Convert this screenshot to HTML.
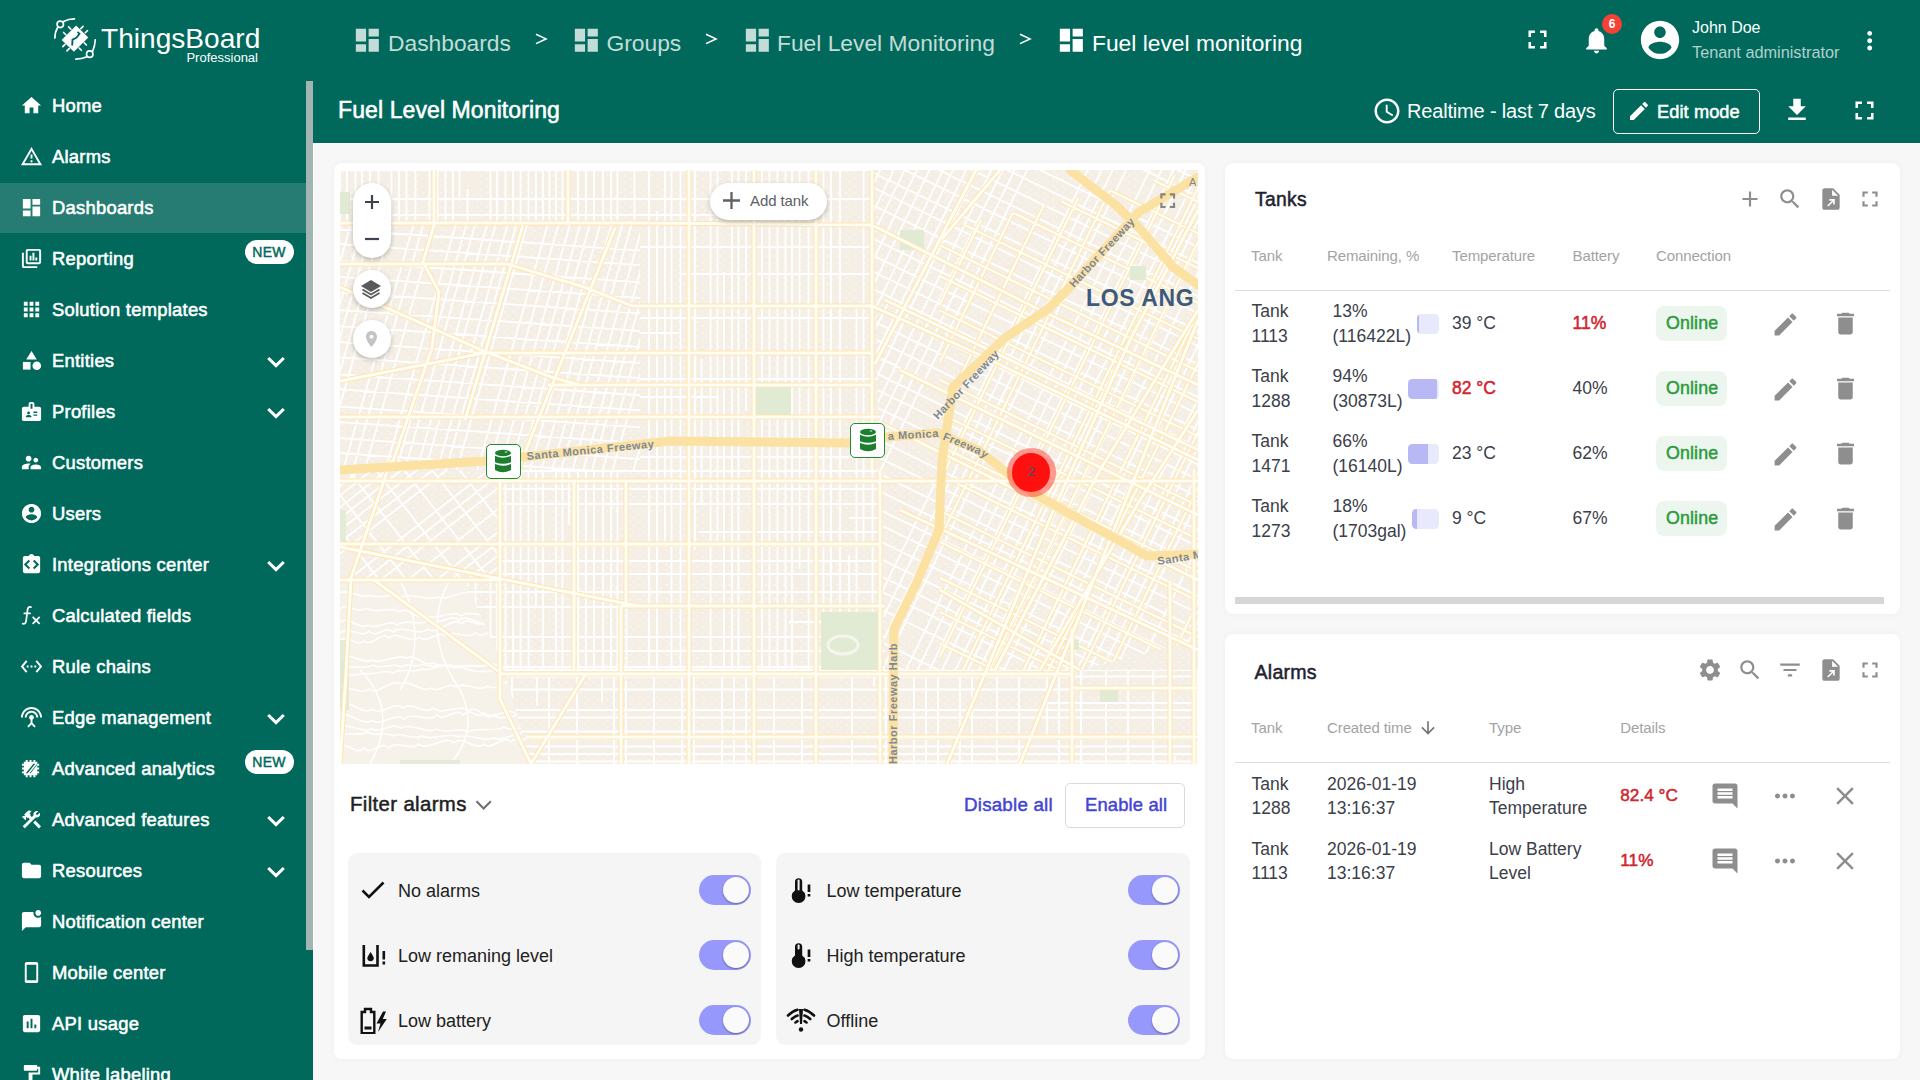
<!DOCTYPE html>
<html><head><meta charset="utf-8">
<style>
*{box-sizing:border-box;margin:0;padding:0}
html,body{width:1920px;height:1080px;overflow:hidden;font-family:"Liberation Sans",sans-serif;background:#f7f7f7}
.abs{position:absolute}
#top{position:absolute;left:0;top:0;width:1920px;height:143px;background:#00695c}
#side{position:absolute;left:0;top:80px;width:313px;height:1000px;background:#00695c;overflow:hidden}
#thumb{position:absolute;left:306px;top:81px;width:7px;height:869px;background:#a2b5b2}
.nav{position:absolute;left:0;width:306px;height:50px;color:#fff;font-weight:normal;font-size:18.4px;letter-spacing:0.25px;line-height:50px;-webkit-text-stroke:0.55px #fff}
.nav.sel{background:#267c72}
.nav .t{position:absolute;left:52px;top:0;white-space:nowrap}
.nav svg.i{position:absolute;left:20px;top:13px;width:23px;height:23px;fill:#fff}
.nav .chev{position:absolute;left:265.5px;top:19px;width:20px;height:14px}
.nav .new{position:absolute;left:244.5px;top:6px;width:49px;height:24px;border-radius:12px;background:#fff;color:#00695c;font-size:14px;font-weight:normal;text-align:center;line-height:24px;letter-spacing:0.2px;-webkit-text-stroke:0.45px #00695c}
.card{position:absolute;background:#fff;border-radius:8px;box-shadow:0 0 6px rgba(0,0,0,0.04)}
</style></head><body>
<div id="top"></div>
<div id="side"></div>
<div class="nav" style="top:81px"><svg class="i" viewBox="0 0 24 24"><path d="M10 20v-6h4v6h5v-8h3L12 3 2 12h3v8z"/></svg><span class="t">Home</span></div>
<div class="nav" style="top:132px"><svg class="i" viewBox="0 0 24 24"><path d="M12 5.99L19.53 19H4.47L12 5.99M12 2L1 21h22L12 2zm1 14h-2v2h2v-2zm0-6h-2v4h2v-4z"/></svg><span class="t">Alarms</span></div>
<div class="nav sel" style="top:183px"><svg class="i" viewBox="0 0 24 24"><path d="M3 13h8V3H3v10zm0 8h8v-6H3v6zm10 0h8V11h-8v10zm0-18v6h8V3h-8z"/></svg><span class="t">Dashboards</span></div>
<div class="nav" style="top:234px"><svg class="i" viewBox="0 0 24 24"><path d="M4 6H2v14c0 1.1.9 2 2 2h14v-2H4V6z"/><path d="M20 2H8c-1.1 0-2 .9-2 2v12c0 1.1.9 2 2 2h12c1.1 0 2-.9 2-2V4c0-1.1-.9-2-2-2zm0 14H8V4h12v12z" /><path d="M10 9h2v5h-2zM13 6h2v8h-2zM16 11h2v3h-2z"/></svg><span class="t">Reporting</span><span class="new">NEW</span></div>
<div class="nav" style="top:285px"><svg class="i" viewBox="0 0 24 24"><path d="M4 8h4V4H4v4zm6 12h4v-4h-4v4zm-6 0h4v-4H4v4zm0-6h4v-4H4v4zm6 0h4v-4h-4v4zm6-10v4h4V4h-4zm-6 4h4V4h-4v4zm6 6h4v-4h-4v4zm0 6h4v-4h-4v4z"/></svg><span class="t">Solution templates</span></div>
<div class="nav" style="top:336px"><svg class="i" viewBox="0 0 24 24"><path d="M12 2l-5.5 9h11z"/><circle cx="17.5" cy="17.5" r="4.5"/><path d="M3 13.5h8v8H3z"/></svg><span class="t">Entities</span><svg class="chev" viewBox="0 0 20 14"><path d="M2.2 3 L10 10.6 L17.8 3" fill="none" stroke="#fff" stroke-width="3.1"/></svg></div>
<div class="nav" style="top:387px"><svg class="i" viewBox="0 0 24 24"><path d="M20 7h-5V4c0-1.1-.9-2-2-2h-2c-1.1 0-2 .9-2 2v3H4c-1.1 0-2 .9-2 2v11c0 1.1.9 2 2 2h16c1.1 0 2-.9 2-2V9c0-1.1-.9-2-2-2zM9 12c.83 0 1.5.67 1.5 1.5S9.83 15 9 15s-1.5-.67-1.5-1.5S8.17 12 9 12zm3 6H6v-.43c0-.6.36-1.15.92-1.39.64-.28 1.34-.43 2.08-.43s1.44.15 2.08.43c.55.24.92.78.92 1.39V18zm1-9h-2V4h2v5zm5 7.5h-4V15h4v1.5zm0-3h-4V12h4v1.5z"/></svg><span class="t">Profiles</span><svg class="chev" viewBox="0 0 20 14"><path d="M2.2 3 L10 10.6 L17.8 3" fill="none" stroke="#fff" stroke-width="3.1"/></svg></div>
<div class="nav" style="top:438px"><svg class="i" viewBox="0 0 24 24"><path d="M16.5 12c1.38 0 2.49-1.12 2.49-2.5S17.88 7 16.5 7C15.12 7 14 8.12 14 9.5s1.12 2.5 2.5 2.5zM9 11c1.66 0 2.99-1.34 2.99-3S10.66 5 9 5C7.34 5 6 6.34 6 8s1.34 3 3 3zm7.5 3c-1.83 0-5.5.92-5.5 2.75V19h11v-2.25c0-1.830-3.67-2.75-5.5-2.75zM9 13c-2.33 0-7 1.17-7 3.5V19h7v-2.25c0-.85.33-2.340 2.37-3.47C10.5 13.1 9.66 13 9 13z"/></svg><span class="t">Customers</span></div>
<div class="nav" style="top:489px"><svg class="i" viewBox="0 0 24 24"><path d="M12 2C6.48 2 2 6.48 2 12s4.48 10 10 10 10-4.48 10-10S17.52 2 12 2zm0 3c1.66 0 3 1.34 3 3s-1.34 3-3 3-3-1.34-3-3 1.34-3 3-3zm0 14.2c-2.5 0-4.71-1.28-6-3.22.03-1.99 4-3.08 6-3.080 1.99 0 5.970 1.09 6 3.08-1.29 1.94-3.5 3.22-6 3.22z"/></svg><span class="t">Users</span></div>
<div class="nav" style="top:540px"><svg class="i" viewBox="0 0 24 24"><path d="M19 3h-4.18C14.4 1.84 13.3 1 12 1s-2.4.84-2.82 2H5c-1.1 0-2 .9-2 2v14c0 1.1.9 2 2 2h14c1.1 0 2-.9 2-2V5c0-1.1-.9-2-2-2zm-8.5 12.5L9 17l-5-5 5-5 1.5 1.5L7 12l3.5 3.5zm4.5 1.5l-1.5-1.5L17 12l-3.5-3.5L15 7l5 5-5 5z"/></svg><span class="t">Integrations center</span><svg class="chev" viewBox="0 0 20 14"><path d="M2.2 3 L10 10.6 L17.8 3" fill="none" stroke="#fff" stroke-width="3.1"/></svg></div>
<div class="nav" style="top:591px"><svg class="i" viewBox="0 0 24 24"><path d="M11.5 3.2 C9.5 2.6 8.3 3.6 7.9 5.8 L6.4 17.5 C6 20.2 4.8 21 2.8 20.5 M4.5 9.8 H10.5" fill="none" stroke="#fff" stroke-width="1.8" stroke-linecap="round"/><path d="M13.2 13.5 L20.5 20.8 M20.5 13.5 L13.2 20.8" stroke="#fff" stroke-width="1.9"/></svg><span class="t">Calculated fields</span></div>
<div class="nav" style="top:642px"><svg class="i" viewBox="0 0 24 24"><path d="M7.77 6.76L6.23 5.48.82 12l5.41 6.52 1.54-1.28L3.42 12l4.35-5.24zM7 13h2v-2H7v2zm10-2h-2v2h2v-2zm-6 2h2v-2h-2v2zm6.77-7.52l-1.54 1.28L20.58 12l-4.35 5.240 1.54 1.28L23.18 12l-5.41-6.52z"/></svg><span class="t">Rule chains</span></div>
<div class="nav" style="top:693px"><svg class="i" viewBox="0 0 24 24"><path d="M12 5c-3.87 0-7 3.13-7 7h2c0-2.76 2.24-5 5-5s5 2.24 5 5h2c0-3.87-3.13-7-7-7zm1 9.29c.88-.39 1.5-1.26 1.5-2.29 0-1.38-1.12-2.5-2.5-2.5S9.5 10.62 9.5 12c0 1.02.62 1.9 1.5 2.29v3.3L7.59 21 9 22.41l3-3 3 3L16.41 21 13 17.59v-3.3zM12 1C5.930 1 1 5.93 1 12h2c0-4.97 4.03-9 9-9s9 4.03 9 9h2c0-6.07-4.93-11-11-11z"/></svg><span class="t">Edge management</span><svg class="chev" viewBox="0 0 20 14"><path d="M2.2 3 L10 10.6 L17.8 3" fill="none" stroke="#fff" stroke-width="3.1"/></svg></div>
<div class="nav" style="top:744px"><svg class="i" viewBox="0 0 24 24"><path d="M6 3h2v2h2V3h2v2h2V3h2v2h2v2h2v2h-2v2h2v2h-2v2h2v2h-2v2h-2v2h-2v-2h-2v2h-2v-2H8v2H6v-2H4v-2H2v-2h2v-2H2v-2h2V9H2V7h2V5h2z" /><path d="M8 17l8-10h-2l-8 10z" fill="#00695c"/><path d="M11 17l7-9v-1l-8 10z" fill="#00695c"/></svg><span class="t">Advanced analytics</span><span class="new">NEW</span></div>
<div class="nav" style="top:795px"><svg class="i" viewBox="0 0 24 24"><path d="M13.78 15.3l6 6 2.11-2.16-6-6zM17.5 10c1.93 0 3.5-1.57 3.5-3.5 0-.58-.16-1.12-.41-1.6l-2.7 2.7-1.49-1.49 2.7-2.7c-.48-.25-1.02-.41-1.6-.41C15.57 3 14 4.57 14 6.5c0 .41.08.8.21 1.16l-1.85 1.85-1.78-1.78.71-.71-1.41-1.41L12 3.49c-1.17-1.17-3.07-1.17-4.24 0L4.22 7.03l1.41 1.41H2.81l-.71.71 3.54 3.54.71-.71V9.15l1.41 1.41.71-.71 1.78 1.78-7.41 7.410 2.12 2.12L16.34 9.79c.36.13.75.21 1.16.21z"/></svg><span class="t">Advanced features</span><svg class="chev" viewBox="0 0 20 14"><path d="M2.2 3 L10 10.6 L17.8 3" fill="none" stroke="#fff" stroke-width="3.1"/></svg></div>
<div class="nav" style="top:846px"><svg class="i" viewBox="0 0 24 24"><path d="M10 4H4c-1.1 0-1.99.9-1.99 2L2 18c0 1.1.9 2 2 2h16c1.1 0 2-.9 2-2V8c0-1.1-.9-2-2-2h-8l-2-2z"/></svg><span class="t">Resources</span><svg class="chev" viewBox="0 0 20 14"><path d="M2.2 3 L10 10.6 L17.8 3" fill="none" stroke="#fff" stroke-width="3.1"/></svg></div>
<div class="nav" style="top:897px"><svg class="i" viewBox="0 0 24 24"><path d="M22 6.98V16c0 1.1-.9 2-2 2H6l-4 4V4c0-1.1.9-2 2-2h10.1c-.06.32-.1.66-.1 1 0 2.76 2.24 5 5 5 1.13 0 2.16-.39 3-1.02zM16 3c0 1.66 1.34 3 3 3s3-1.34 3-3-1.34-3-3-3-3 1.34-3 3z"/></svg><span class="t">Notification center</span></div>
<div class="nav" style="top:948px"><svg class="i" viewBox="0 0 24 24"><path d="M17 1.01L7 1c-1.1 0-2 .9-2 2v18c0 1.1.9 2 2 2h10c1.1 0 2-.9 2-2V3c0-1.1-.9-1.99-2-1.99zM17 20H7V4h10v16z"/></svg><span class="t">Mobile center</span></div>
<div class="nav" style="top:999px"><svg class="i" viewBox="0 0 24 24"><path d="M19 3H5c-1.1 0-2 .9-2 2v14c0 1.1.9 2 2 2h14c1.1 0 2-.9 2-2V5c0-1.1-.9-2-2-2zM9 17H7v-7h2v7zm4 0h-2V7h2v10zm4 0h-2v-4h2v4z"/></svg><span class="t">API usage</span></div>
<div class="nav" style="top:1050px"><svg class="i" viewBox="0 0 24 24"><path d="M18 4V3c0-.55-.45-1-1-1H5c-.55 0-1 .45-1 1v4c0 .55.45 1 1 1h12c.55 0 1-.45 1-1V6h1v4H9v11c0 .55.45 1 1 1h2c.55 0 1-.45 1-1v-9h8V4h-3z"/></svg><span class="t">White labeling</span></div>
<div id="thumb"></div>
<div class="abs" style="left:313px;top:143px;width:1607px;height:1px;background:#fff"></div>
<div class="abs" style="left:313px;top:143px;width:1px;height:937px;background:#fff"></div>
<!-- logo -->
<svg class="abs" style="left:45px;top:10px" width="80" height="60" viewBox="0 0 1440 1080">
 <g fill="none" stroke="#fff" stroke-width="30" stroke-linecap="round">
  <circle cx="275" cy="258" r="58"/>
  <circle cx="805" cy="795" r="58"/>
  <path d="M335 205 Q420 160 530 160"/>
  <path d="M228 315 Q180 390 178 505"/>
  <path d="M745 845 Q660 880 555 885"/>
  <path d="M860 735 Q900 640 905 535"/>
  <path d="M335 405 L375 445 M425 305 L465 345 M685 295 L645 335 M765 370 L725 410 M745 630 L705 590 M655 725 L615 685 M320 660 L360 620 M395 735 L435 695"/>
 </g>
 <path d="M560 280 L780 495 L520 750 L300 540 Z" fill="#fff"/>
 <path d="M585 395 L620 430 L565 500 L495 535 L490 640" fill="none" stroke="#00695c" stroke-width="34"/>
</svg>
<div class="abs" style="left:101px;top:19.5px;font-size:28.1px;color:#fff;line-height:38px;white-space:nowrap">ThingsBoard</div>
<div class="abs" style="left:158px;top:50px;width:100px;text-align:right;font-size:13px;color:#fff;line-height:16px">Professional</div>
<!-- breadcrumbs -->
<style>
.bc{position:absolute;top:0;height:80px;line-height:80px;font-size:22.8px;color:#c3dcd7;white-space:nowrap}
.bci{position:absolute;fill:#c3dcd7}
.gt{position:absolute;top:33px}
.hi{position:absolute;fill:#fff}
</style>
<svg class="bci" style="left:352px;top:25px" width="30.7" height="30.7" viewBox="0 0 24 24"><path d="M3 13h8V3H3v10zm0 8h8v-6H3v6zm10 0h8V11h-8v10zm0-18v6h8V3h-8z"/></svg>
<div class="bc" style="left:388px;top:3px;">Dashboards</div>
<svg class="gt" style="left:535px" width="13" height="12" viewBox="0 0 13 12"><path d="M1 1.2 L11 5.9 L1 10.6" fill="none" stroke="#fff" stroke-width="1.6"/></svg>
<svg class="bci" style="left:571px;top:25px" width="30.7" height="30.7" viewBox="0 0 24 24"><path d="M3 13h8V3H3v10zm0 8h8v-6H3v6zm10 0h8V11h-8v10zm0-18v6h8V3h-8z"/></svg>
<div class="bc" style="left:606.5px;top:3px;">Groups</div>
<svg class="gt" style="left:705px" width="13" height="12" viewBox="0 0 13 12"><path d="M1 1.2 L11 5.9 L1 10.6" fill="none" stroke="#fff" stroke-width="1.6"/></svg>
<svg class="bci" style="left:742px;top:25px" width="30.7" height="30.7" viewBox="0 0 24 24"><path d="M3 13h8V3H3v10zm0 8h8v-6H3v6zm10 0h8V11h-8v10zm0-18v6h8V3h-8z"/></svg>
<div class="bc" style="left:777px;top:3px;">Fuel Level Monitoring</div>
<svg class="gt" style="left:1019px" width="13" height="12" viewBox="0 0 13 12"><path d="M1 1.2 L11 5.9 L1 10.6" fill="none" stroke="#fff" stroke-width="1.6"/></svg>
<svg class="bci" style="left:1056px;top:25px;fill:#fff" width="30.7" height="30.7" viewBox="0 0 24 24"><path d="M3 13h8V3H3v10zm0 8h8v-6H3v6zm10 0h8V11h-8v10zm0-18v6h8V3h-8z"/></svg>
<div class="bc" style="left:1092px;top:3px;color:#fff">Fuel level monitoring</div>
<!-- right header -->
<svg class="hi" style="left:1522px;top:24px" width="31" height="31" viewBox="0 0 24 24"><path d="M7 14H5v5h5v-2H7v-3zm-2-4h2V7h3V5H5v5zm12 7h-3v2h5v-5h-2v3zM14 5v2h3v3h2V5h-5z"/></svg>
<svg class="hi" style="left:1581px;top:25px" width="31" height="31" viewBox="0 0 24 24"><path d="M12 22c1.1 0 2-.9 2-2h-4c0 1.1.89 2 2 2zm6-6v-5c0-3.07-1.64-5.64-4.5-6.32V4c0-.83-.67-1.5-1.5-1.5s-1.5.67-1.5 1.5v.68C7.63 5.36 6 7.92 6 11v5l-2 2v1h16v-1l-2-2z"/></svg>
<div class="abs" style="left:1602px;top:14px;width:20px;height:20px;border-radius:10px;background:#f44336;color:#fff;font-size:12px;font-weight:bold;text-align:center;line-height:20px">6</div>
<svg class="hi" style="left:1637px;top:17px" width="46" height="46" viewBox="0 0 24 24"><path d="M12 2C6.48 2 2 6.48 2 12s4.48 10 10 10 10-4.48 10-10S17.52 2 12 2zm0 3c1.66 0 3 1.34 3 3s-1.34 3-3 3-3-1.34-3-3 1.340-3 3-3zm0 14.2c-2.5 0-4.71-1.28-6-3.22.03-1.99 4-3.08 6-3.08 1.99 0 5.97 1.09 6 3.08-1.29 1.94-3.5 3.22-6 3.22z"/></svg>
<div class="abs" style="left:1692px;top:16px;font-size:16px;color:#fff;line-height:24px;white-space:nowrap">John Doe</div>
<div class="abs" style="left:1692px;top:40px;font-size:16.3px;color:rgba(255,255,255,0.7);line-height:24px;white-space:nowrap">Tenant administrator</div>
<svg class="hi" style="left:1855px;top:25.5px" width="29.4" height="29.4" viewBox="0 0 24 24"><path d="M12 8c1.1 0 2-.9 2-2s-.9-2-2-2-2 .9-2 2 .9 2 2 2zm0 2c-1.1 0-2 .9-2 2s.9 2 2 2 2-.9 2-2-.9-2-2-2zm0 6c-1.1 0-2 .9-2 2s.9 2 2 2 2-.9 2-2-.9-2-2-2z"/></svg>
<!-- toolbar -->
<div class="abs" style="left:338px;top:95.5px;font-size:23px;letter-spacing:0.1px;-webkit-text-stroke:0.55px #fff;color:#fff;line-height:28px;white-space:nowrap">Fuel Level Monitoring</div>
<svg class="hi" style="left:1371.5px;top:96px" width="30" height="30" viewBox="0 0 24 24"><path d="M11.99 2C6.47 2 2 6.48 2 12s4.47 10 9.99 10C17.52 22 22 17.52 22 12S17.52 2 11.99 2zM12 20c-4.42 0-8-3.58-8-8s3.58-8 8-8 8 3.58 8 8-3.58 8-8 8zm.5-13H11v6l5.25 3.15.75-1.23-4.5-2.67z"/></svg>
<div class="abs" style="left:1407px;top:97px;font-size:20px;letter-spacing:-0.17px;color:#fff;line-height:28px;white-space:nowrap">Realtime - last 7 days</div>
<div class="abs" style="left:1613px;top:89px;width:147px;height:45px;border:1.3px solid #fff;border-radius:5px"></div>
<svg class="hi" style="left:1627px;top:99px" width="24" height="24" viewBox="0 0 24 24"><path d="M3 17.25V21h3.75L17.81 9.94l-3.75-3.75L3 17.25zM20.71 7.04c.39-.39.39-1.02 0-1.41l-2.34-2.34c-.39-.39-1.02-.39-1.41 0l-1.83 1.83 3.75 3.75 1.83-1.83z"/></svg>
<div class="abs" style="left:1657px;top:97.5px;font-size:18.2px;letter-spacing:0.1px;-webkit-text-stroke:0.5px #fff;color:#fff;line-height:28px;white-space:nowrap">Edit mode</div>
<svg class="hi" style="left:1782px;top:95px" width="30" height="30" viewBox="0 0 24 24"><path d="M19 9h-4V3H9v6H5l7 7 7-7zM5 18v2h14v-2H5z"/></svg>
<svg class="hi" style="left:1849px;top:95px" width="31" height="31" viewBox="0 0 24 24"><path d="M7 14H5v5h5v-2H7v-3zm-2-4h2V7h3V5H5v5zm12 7h-3v2h5v-5h-2v3zM14 5v2h3v3h2V5h-5z"/></svg>

<!-- cards -->
<div class="card" style="left:334px;top:163px;width:871px;height:896px"></div>
<div class="card" style="left:1225px;top:163px;width:675px;height:451px"></div>
<div class="card" style="left:1225px;top:634px;width:675px;height:425px"></div>
<svg class="abs" style="left:340px;top:170px" width="858" height="594" viewBox="0 0 858 594">
<defs>
<clipPath id="r1"><path d="M0 55 H300 V300 H0 Z"/></clipPath>
<clipPath id="r1b"><path d="M0 300 H160 V410 H0 Z"/></clipPath>
<clipPath id="rh"><path d="M0 410 H125 L165 500 L190 594 H0 Z"/></clipPath>
<clipPath id="r2"><path d="M0 0 H532 L540 300 L545 500 H858 V594 H190 L165 500 L125 410 H160 V300 H300 V55 H0 Z"/></clipPath>
<clipPath id="dt"><path d="M600 60 L858 0 V470 L740 500 H600 Z"/></clipPath>
<clipPath id="r3"><path d="M532 0 H858 V470 L740 500 H545 L540 300 Z"/></clipPath>
<pattern id="bp" width="9" height="7" patternUnits="userSpaceOnUse"><rect x="1" y="1" width="3" height="2" fill="#f7f3ec"/><rect x="5" y="4" width="2" height="2" fill="#f7f3ec"/></pattern>
</defs>
<rect width="858" height="594" fill="#f4eee5"/>
<rect width="858" height="594" fill="url(#bp)"/>
<g clip-path="url(#r1)"><path d="M-425 921L71 -809M-415 924L81 -806M-406 927L91 -803M-396 930L100 -801M-386 933L110 -798M-368 938L128 -793M-357 941L139 -789M-337 946L159 -784M-329 949L168 -781M-320 951L176 -779M-310 954L186 -776M-300 957L196 -773M-281 963L215 -768M-271 966L225 -765M-261 968L235 -762M-252 971L244 -759M-241 974L255 -756M-232 977L264 -754M-223 979L273 -751M-214 982L282 -748M-194 988L302 -743M-185 990L311 -740M-174 993L322 -737M-155 999L341 -731M-145 1002L351 -729M-137 1004L359 -726M-126 1007L370 -723M-118 1009L378 -721M-107 1013L389 -718M-99 1015L397 -715M-89 1018L407 -713M-70 1023L426 -707M-60 1026L436 -704M-50 1029L447 -701M-40 1032L456 -699M-31 1034L465 -696M-22 1037L475 -693M-11 1040L485 -690M-1 1043L495 -687M7 1045L504 -685M18 1048L514 -682M28 1051L524 -679M36 1054L532 -677M46 1056L542 -674M55 1059L551 -671M74 1065L571 -666M84 1067L580 -663M95 1071L591 -660M104 1073L600 -657M113 1076L609 -655M124 1079L620 -652M132 1081L628 -649M143 1084L639 -646M151 1087L647 -644M162 1090L658 -641M171 1092L667 -638M180 1095L676 -635M190 1098L686 -633M199 1100L696 -630M210 1103L706 -627M219 1106L715 -624M228 1109L724 -622M-725 -232L1070 -106M-727 -216L1069 -90M-728 -199L1068 -74M-729 -185L1067 -60M-730 -168L1066 -43M-733 -120L1062 5M-736 -88L1060 38M-737 -72L1059 53M-738 -56L1058 69M-742 8L1053 133M-743 22L1052 148M-744 39L1051 165M-746 55L1050 180M-747 70L1049 196M-748 88L1048 213M-749 104L1047 229M-750 120L1046 245M-751 135L1044 260M-752 152L1043 277M-753 167L1042 292M-755 184L1041 309M-756 199L1040 325M-757 215L1039 341M-758 230L1038 356M-759 248L1037 373M-760 263L1035 389M-761 279L1034 405M-762 295L1033 420M-763 310L1032 435M-764 326L1031 451M-766 343L1030 468M-767 359L1029 485M-768 375L1028 500M-769 390L1027 516" stroke="#fff" stroke-width="1.8" fill="none"/></g>
<g clip-path="url(#r1b)"><path d="M-740 768L679 -341M-735 774L684 -334M-729 782L690 -327M-723 789L695 -319M-718 796L701 -312M-712 803L706 -306M-706 810L712 -298M-701 817L717 -291M-696 824L722 -284M-690 831L728 -277M-684 839L734 -269M-679 846L740 -262M-674 852L744 -256M-668 859L750 -249M-663 866L756 -242M-657 874L761 -235M-651 881L767 -227M-646 888L773 -220M-630 908L789 -200M-624 916L795 -192M-618 924L801 -184M-607 937L811 -171M-596 951L822 -157M-591 958L827 -150M-585 966L833 -142M-579 973L839 -135M-573 981L845 -127M-569 987L850 -122M-563 994L855 -114M-551 1009L867 -99M-546 1015L872 -93M-540 1023L878 -85M-535 1030L884 -78M-530 1037L889 -72M-523 1044L895 -64M-301 -489L807 929M-318 -476L790 942M-336 -462L772 956M-353 -449L755 969M-371 -435L738 983M-387 -422L721 996M-404 -409L704 1010M-423 -394L686 1024M-440 -381L668 1037M-457 -367L651 1051M-475 -354L633 1065M-492 -340L616 1078M-509 -327L599 1092M-526 -314L582 1105M-561 -286L547 1132M-578 -273L530 1145M-612 -246L496 1172M-630 -233L479 1186M-648 -218L460 1200" stroke="#fff" stroke-width="1.8" fill="none"/></g>
<g clip-path="url(#rh)"><rect x="0" y="410" width="200" height="190" fill="#f6f2ea"/><path d="M0 423 C8 418 21 430 29 425 C37 430 55 422 63 427 C71 422 90 432 98 427 C106 432 126 418 134 423 C142 418 151 428 159 423 C167 428 177 421 185 425 C193 421 208 430 216 426 M0 439 C8 432 18 445 26 438 C34 445 52 435 60 442 C68 435 77 452 85 445 C93 452 113 439 121 446 C129 439 143 449 151 443 C159 449 172 436 180 443 C188 436 203 445 211 438 M0 452 C8 445 20 461 28 455 C36 461 49 448 57 455 C65 448 81 457 89 450 C97 457 111 443 119 450 C127 443 146 460 154 454 C162 460 172 447 180 454 C188 447 196 459 204 453 M0 463 C8 454 21 470 29 461 C37 470 45 454 53 462 C61 454 80 467 88 459 C96 467 113 445 121 454 C129 445 138 460 146 451 C154 460 170 441 178 449 C186 441 197 459 205 450 M0 471 C8 463 16 478 24 471 C32 478 41 460 49 468 C57 460 71 475 79 467 C87 475 98 459 106 466 C114 459 127 470 135 463 C143 470 152 456 160 464 C168 456 183 472 191 464 C199 472 217 458 225 466 M0 487 C8 482 24 495 32 490 C40 495 59 483 67 488 C75 483 85 498 93 493 C101 498 110 492 118 498 C126 492 145 499 153 494 C161 499 170 491 178 496 C186 491 196 497 204 492 M0 499 C8 493 25 501 33 495 C41 501 53 491 61 497 C69 491 75 500 83 494 C91 500 106 492 114 498 C122 492 142 500 150 494 C158 500 171 491 179 497 C187 491 200 505 208 499 M0 507 C8 503 15 507 23 503 C31 507 45 498 53 503 C61 498 75 503 83 499 C91 503 100 492 108 496 C116 492 134 505 142 501 C150 505 168 493 176 497 C184 493 191 506 199 502 C207 506 220 500 228 504 M0 520 C8 514 21 526 29 519 C37 526 52 508 60 514 C68 508 83 524 91 518 C99 524 108 511 116 517 C124 511 140 523 148 516 C156 523 165 507 173 513 C181 507 194 515 202 508 M0 535 C8 527 24 547 32 539 C40 547 55 530 63 538 C71 530 85 546 93 538 C101 546 121 533 129 541 C137 533 146 553 154 545 C162 553 179 540 187 548 C195 540 212 555 220 547 M0 547 C8 539 24 558 32 550 C40 558 56 541 64 549 C72 541 89 553 97 545 C105 553 115 536 123 545 C131 536 137 551 145 543 C153 551 168 536 176 544 C184 536 194 557 202 549 M0 558 C8 552 23 564 31 559 C39 564 53 552 61 558 C69 552 89 565 97 559 C105 565 121 556 129 562 C137 556 156 563 164 557 C172 563 187 554 195 559 C203 554 212 564 220 558 M0 566 C8 561 19 567 27 562 C35 567 45 561 53 566 C61 561 74 571 82 566 C90 571 110 562 118 567 C126 562 146 573 154 568 C162 573 179 559 187 564 C195 559 210 572 218 567 M0 578 C8 570 16 587 24 578 C32 587 41 569 49 578 C57 569 71 582 79 574 C87 582 106 564 114 573 C122 564 136 582 144 574 C152 582 163 563 171 572 C179 563 194 581 202 572" stroke="#fff" stroke-width="1.5" fill="none"/><path d="M60 410 Q90 470 60 520 M110 410 Q80 460 120 520 Q140 560 110 594 M20 500 Q60 540 30 594" stroke="#fff" stroke-width="1.5" fill="none"/></g>
<path d="M0 470 h9 v70 h-9z M0 340 h6 v40 h-6z M60 590 h60 v4 h-60z" fill="#e4ebd8"/>
<g clip-path="url(#r2)"><path d="M0.0 0V500M7.0 0V500M15.5 0V500M22.0 0V500M30.0 0V500M38.5 0V49M45.0 480V500M51.5 0V500M59.0 0V182M66.5 0V500M75.5 0V500M89.5 0V500M97.5 0V500M105.5 0V500M113.0 0V124M119.5 0V30M127.5 19V500M135.5 338V500M150.5 0V500M157.0 0V500M165.5 0V500M173.0 0V500M180.5 0V500M188.5 0V500M196.0 0V438M203.0 0V500M209.5 0V155M216.0 0V500M222.5 0V500M229.0 0V355M238.0 0V500M246.0 0V500M254.0 0V500M263.0 0V500M271.0 0V500M277.5 0V500M286.5 379V500M294.5 0V79M309.0 0V500M317.0 41V500M325.0 0V373M331.5 0V500M340.5 0V500M348.5 0V500M355.0 0V379M361.5 189V334M370.5 0V500M377.5 0V371M384.0 102V500M392.0 0V500M398.5 0V500M406.0 0V241M413.0 180V500M422.0 0V500M429.5 0V500M437.5 0V500M445.5 0V500M452.0 0V500M459.5 0V399M468.5 0V500M475.5 0V236M483.5 0V500M491.0 0V454M500.0 0V500M509.0 385V479M516.5 135V500M523.5 0V374M532.5 0V500M541.0 0V500M0 0.0H545M0 29.0H545M41 45.0H377M0 61.0H243M0 77.0H545M540 90.0H545M342 104.0H545M103 135.0H545M0 148.0H545M0 163.0H339M0 177.0H219M123 193.0H176M0 209.0H545M0 227.0H377M0 243.0H218M0 272.0H180M0 287.0H545M0 301.0H545M0 319.0H545M0 334.0H545M509 348.0H545M359 362.0H545M0 376.0H545M0 391.0H545M0 404.0H545M0 422.0H545M0 437.0H545M449 452.0H545M0 467.0H545M0 481.0H545M0 497.0H545M160.0 500V594M172.0 500V594M197.0 500V536M209.0 500V594M237.0 500V594M262.0 500V532M274.0 500V594M286.0 511V594M314.0 500V594M342.0 500V594M354.0 500V594M382.0 500V594M394.0 500V594M406.0 500V594M434.0 500V594M462.0 500V594M487.0 500V507M512.0 500V594M534.0 500V516M546.0 500V594M574.0 500V594M586.0 500V594M598.0 500V594M620.0 500V594M632.0 500V594M657.0 500V594M679.0 500V594M707.0 500V565M719.0 500V594M741.0 500V594M766.0 500V594M788.0 500V594M813.0 500V594M835.0 586V593M857.0 500V594M160 500.0H858M160 506.5H858M160 519.5H858M702 533.0H858M160 540.0H858M160 547.5H858M160 561.5H464M160 569.0H858M160 576.5H858M160 584.0H858M160 591.5H858" stroke="#fff" stroke-width="1.8" fill="none"/></g>
<g clip-path="url(#r3)"><path d="M187 -702L1805 87M180 -688L1798 101M174 -675L1792 114M168 -662L1785 128M161 -647L1778 142M154 -633L1772 156M148 -621L1766 168M141 -608L1759 181M134 -593L1752 196M128 -580L1746 209M122 -567L1739 222M115 -554L1733 236M108 -540L1726 249M101 -525L1719 264M95 -513L1713 276M88 -499L1706 290M81 -485L1699 304M68 -458L1686 331M62 -446L1680 343M55 -431L1673 358M42 -404L1660 385M36 -391L1654 398M29 -378L1647 411M9 -337L1627 452M3 -324L1621 465M-4 -310L1614 479M-10 -297L1608 492M-17 -284L1601 506M-24 -269L1594 520M-30 -257L1588 532M-37 -243L1581 547M-50 -216L1568 574M-56 -202L1561 587M-63 -189L1555 600M-70 -175L1548 614M-76 -161L1542 628M-82 -149L1535 640M-89 -135L1529 654M-96 -122L1522 667M-102 -108L1516 681M-109 -95L1509 694M-116 -81L1502 708M-122 -68L1496 721M-128 -55L1490 734M-135 -41L1483 748M-141 -28L1476 761M-148 -14L1470 775M-155 1L1463 790M-161 13L1457 802M-168 26L1450 815M-175 40L1443 829M-181 54L1436 843M-187 66L1430 855M-194 81L1424 870M-207 107L1410 896M-214 121L1404 910M-227 148L1391 937M-241 175L1377 964M-254 202L1364 991M-260 215L1358 1004M-267 229L1351 1018M-273 243L1344 1032M-280 255L1338 1045M-287 270L1331 1059M-293 283L1325 1072M-299 296L1318 1085M-306 310L1312 1099M-312 323L1305 1112M-326 350L1292 1140M-333 365L1285 1154M-339 378L1279 1167M-345 390L1272 1179M-352 405L1265 1194M-359 418L1259 1208M-365 431L1252 1221M-378 458L1239 1247M-392 485L1226 1274M-398 498L1220 1287M-405 512L1213 1301M-288 819L501 -799M-278 824L511 -794M-258 834L531 -784M-248 839L541 -779M-238 844L551 -774M-229 848L560 -770M-219 853L570 -765M-200 863L590 -755M-189 868L600 -750M-179 872L610 -745M-170 877L619 -741M-159 883L631 -735M-150 887L639 -731M-140 892L649 -726M-129 897L660 -721M-120 901L669 -716M-109 907L680 -711M-100 911L689 -707M-90 916L699 -702M-81 921L709 -697M-70 926L720 -692M-60 931L729 -687M-31 945L758 -673M-20 950L769 -668M-2 959L788 -659M8 964L797 -654M28 974L818 -644M39 979L828 -639M48 984L838 -634M58 988L847 -629M69 994L858 -624M78 998L867 -620M88 1003L877 -615M98 1008L887 -610M109 1013L898 -605M117 1017L906 -601M127 1022L917 -596M137 1027L926 -591M148 1032L937 -586M157 1036L946 -581M167 1041L956 -577M177 1046L966 -572M226 1070L1015 -548M237 1075L1026 -542M246 1080L1035 -538M257 1085L1046 -533M276 1094L1065 -523M285 1099L1075 -519M295 1104L1084 -514M305 1109L1094 -509M316 1114L1105 -504M326 1119L1115 -499M335 1123L1124 -495M345 1128L1134 -490M355 1133L1145 -485M375 1143L1164 -475M384 1147L1173 -471M405 1158L1194 -460M414 1162L1203 -456M424 1167L1213 -451M434 1172L1223 -446M445 1177L1234 -441M463 1186L1252 -432M484 1196L1273 -422M493 1200L1282 -418M502 1205L1291 -413M513 1210L1302 -408M523 1215L1312 -403M533 1220L1323 -398M543 1225L1332 -393M553 1230L1342 -388M562 1234L1351 -384M572 1239L1362 -379M582 1244L1371 -374M591 1248L1381 -369M602 1253L1391 -364M611 1258L1400 -360M621 1263L1410 -355M631 1268L1420 -350M641 1273L1430 -345M651 1278L1441 -340M661 1282L1450 -336M691 1297L1480 -321M711 1307L1500 -311M720 1311L1509 -307M731 1316L1520 -302M741 1321L1530 -296M750 1326L1539 -292M761 1331L1550 -287M770 1335L1559 -282M781 1341L1570 -277M790 1345L1579 -273M800 1350L1589 -268M809 1354L1598 -263M819 1359L1608 -259M840 1370L1629 -248M849 1374L1638 -244M870 1384L1659 -234M889 1394L1678 -224M899 1398L1688 -219" stroke="#fff" stroke-width="1.8" fill="none"/></g>
<g clip-path="url(#dt)"><path d="M94 -470L1712 319M81 -444L1699 345M70 -420L1688 369M56 -392L1674 397M43 -366L1661 424M31 -340L1649 449M17 -312L1635 477M3 -284L1621 505M-11 -255L1607 534M-24 -229L1594 560M-36 -204L1582 585M-49 -176L1569 613M-76 -120L1541 669M-90 -93L1528 696M-103 -67L1515 722M-114 -43L1504 746M-128 -14L1490 775M-140 11L1478 800M-154 40L1463 829M-168 67L1450 857M-180 93L1438 882M-194 120L1424 909M-206 146L1412 935M-220 175L1398 964M-233 201L1385 990M-247 230L1371 1019M-259 255L1359 1044M-274 285L1344 1074M-50 926L739 -692M-22 939L767 -679M21 960L810 -657M43 971L833 -646M71 985L860 -633M92 995L882 -623M116 1007L905 -611M163 1030L952 -588M186 1041L975 -577M208 1052L997 -566M233 1064L1022 -554M255 1075L1045 -543M302 1097L1091 -520M326 1109L1115 -509M347 1119L1136 -498M375 1133L1164 -485M395 1143L1184 -475M422 1156L1211 -462M444 1167L1233 -451M489 1189L1278 -429M514 1201L1303 -417M538 1213L1327 -405M561 1224L1350 -394M585 1236L1374 -382M630 1258L1419 -360M654 1269L1443 -349M676 1280L1465 -338M698 1290L1487 -327" stroke="#fde6ad" stroke-width="4.2" fill="none"/><path d="M94 -470L1712 319M81 -444L1699 345M70 -420L1688 369M56 -392L1674 397M43 -366L1661 424M31 -340L1649 449M17 -312L1635 477M3 -284L1621 505M-11 -255L1607 534M-24 -229L1594 560M-36 -204L1582 585M-49 -176L1569 613M-76 -120L1541 669M-90 -93L1528 696M-103 -67L1515 722M-114 -43L1504 746M-128 -14L1490 775M-140 11L1478 800M-154 40L1463 829M-168 67L1450 857M-180 93L1438 882M-194 120L1424 909M-206 146L1412 935M-220 175L1398 964M-233 201L1385 990M-247 230L1371 1019M-259 255L1359 1044M-274 285L1344 1074M-50 926L739 -692M-22 939L767 -679M21 960L810 -657M43 971L833 -646M71 985L860 -633M92 995L882 -623M116 1007L905 -611M163 1030L952 -588M186 1041L975 -577M208 1052L997 -566M233 1064L1022 -554M255 1075L1045 -543M302 1097L1091 -520M326 1109L1115 -509M347 1119L1136 -498M375 1133L1164 -485M395 1143L1184 -475M422 1156L1211 -462M444 1167L1233 -451M489 1189L1278 -429M514 1201L1303 -417M538 1213L1327 -405M561 1224L1350 -394M585 1236L1374 -382M630 1258L1419 -360M654 1269L1443 -349M676 1280L1465 -338M698 1290L1487 -327" stroke="#fffdf6" stroke-width="2.4" fill="none"/></g>
<path d="M412 212h39v33h-39z M481 442h57v58h-57z M0 22h10v22H0z M790 96h16v14h-16z M560 60h24v20h-24z M725 470h14v10h-14z M0 490h8v50H0z M760 520h18v12h-18z" fill="#e1ead3"/>
<ellipse cx="503" cy="475" rx="15" ry="9" fill="none" stroke="#f4f6ec" stroke-width="3"/>
<path d="M0 53 H300 L532 55 L700 140 L858 215 M0 94 H167 L244 117 L292 136 H532 L640 185 L858 290 M133 183 H532 M208 215 H532 M0 247 H540 M349 0 V594 M476 0 V594 M532 0 V300 M228 0 V55 M414 0 V594 M275 58 L178 300 M183 55 L125 250 M94 0 V55 L83 92 L99 122 L92 178 L50 300 M0 117 L144 181 L211 207 L240 215 M0 211 L144 183 M0 311 H858 M0 374 H540 M0 410 H160 M281 436 H545 M160 504 H731 M731 518 H858 M186 567 H858 M51 290 L11 408 L6 504 L0 594 M160 300 V529 L191 594 M34 410 L158 501 M191 594 L245 505 M0 377 L298 436 M281 436 V594 M286 311 V436 M234 311 V500 M540 300 V594 M732 459 V594 M830 411 V594 M854 300 V594 M607 594 L711 346 L790 170 L858 40 M655 500 L760 300 L858 140 M700 500 L800 330 L858 240 M545 130 L858 280 M560 200 L858 345 M545 255 L858 410 M560 340 L858 480 M600 420 L740 500 M535 194 L636 0 M602 69 L660 0 M680 594 L858 150" stroke="#fde6ad" stroke-width="5" fill="none"/>
<path d="M0 53 H300 L532 55 L700 140 L858 215 M0 94 H167 L244 117 L292 136 H532 L640 185 L858 290 M133 183 H532 M208 215 H532 M0 247 H540 M349 0 V594 M476 0 V594 M532 0 V300 M228 0 V55 M414 0 V594 M275 58 L178 300 M183 55 L125 250 M94 0 V55 L83 92 L99 122 L92 178 L50 300 M0 117 L144 181 L211 207 L240 215 M0 211 L144 183 M0 311 H858 M0 374 H540 M0 410 H160 M281 436 H545 M160 504 H731 M731 518 H858 M186 567 H858 M51 290 L11 408 L6 504 L0 594 M160 300 V529 L191 594 M34 410 L158 501 M191 594 L245 505 M0 377 L298 436 M281 436 V594 M286 311 V436 M234 311 V500 M540 300 V594 M732 459 V594 M830 411 V594 M854 300 V594 M607 594 L711 346 L790 170 L858 40 M655 500 L760 300 L858 140 M700 500 L800 330 L858 240 M545 130 L858 280 M560 200 L858 345 M545 255 L858 410 M560 340 L858 480 M600 420 L740 500 M535 194 L636 0 M602 69 L660 0 M680 594 L858 150" stroke="#fffdf6" stroke-width="3" fill="none"/>
<path d="M0 300 L146 291 L330 271 L511 273 L547 267 L597 263 L638 280 L694 324 L782 372 L807 386 L858 384 M553 594 L554 459 L576 414 L599 360 L602 290 L613 217 L666 167 L708 139 L730 117 L758 86 L799 42 L858 7 M730 0 L777 36 L802 61 L833 97 L858 115" stroke="#fce2a2" stroke-width="9" fill="none" stroke-linejoin="round" stroke-linecap="round"/>
<path id="smf1" d="M187 290 L330 276" fill="none"/>
<text font-family="Liberation Sans" font-weight="bold" font-size="11" fill="#7e8898" letter-spacing="0.5"><textPath href="#smf1">Santa Monica Freeway</textPath></text>
<path id="smf2" d="M548 270 L597 267 L640 285 L660 300" fill="none"/>
<text font-family="Liberation Sans" font-weight="bold" font-size="11" fill="#7e8898" letter-spacing="0.5"><textPath href="#smf2">a Monica Freeway</textPath></text>
<path id="hf1" d="M598 250 L675 168" fill="none"/>
<text font-family="Liberation Sans" font-weight="bold" font-size="11" fill="#7e8898" letter-spacing="0.5"><textPath href="#hf1">Harbor Freeway</textPath></text>
<path id="hf2" d="M734 118 L800 47" fill="none"/>
<text font-family="Liberation Sans" font-weight="bold" font-size="11" fill="#7e8898" letter-spacing="0.5"><textPath href="#hf2">Harbor Freeway</textPath></text>
<path id="hf3" d="M557 594 L557 470" fill="none"/>
<text font-family="Liberation Sans" font-weight="bold" font-size="11" fill="#7e8898" letter-spacing="0.5"><textPath href="#hf3">Harbor Freeway  Harbor</textPath></text>
<text x="818" y="395" transform="rotate(-9 818 395)" font-family="Liberation Sans" font-weight="bold" font-size="11" fill="#7e8898" letter-spacing="0.5">Santa M</text>
<text x="746" y="136" font-family="Liberation Sans" font-weight="bold" font-size="23" fill="#3d5a7d" letter-spacing="0.6">LOS ANG</text>
<text x="849" y="16" font-family="Liberation Sans" font-size="11" fill="#7e8898">A</text>
</svg>
<style>
.mbtn{position:absolute;background:#fff;box-shadow:0 2px 5px rgba(0,0,0,0.25)}
</style>
<div class="mbtn" style="left:353px;top:183px;width:37.5px;height:75px;border-radius:19px"></div>
<svg class="abs" style="left:364.5px;top:194.5px" width="14" height="14" viewBox="0 0 14 14"><path d="M7 0V14M0 7H14" stroke="#3d4450" stroke-width="2.2"/></svg>
<svg class="abs" style="left:364.5px;top:231.5px" width="14" height="14" viewBox="0 0 14 14"><path d="M0 7H14" stroke="#3d4450" stroke-width="2.2"/></svg>
<div class="mbtn" style="left:353px;top:270px;width:37.5px;height:37.5px;border-radius:50%"></div>
<svg class="abs" style="left:360px;top:278px" width="22" height="22" viewBox="0 0 22 22"><path d="M11 2 L21 8 L11 14 L1 8 Z" fill="#5a5a5a"/><path d="M2.5 11.5 L11 16.5 L19.5 11.5 M2.5 15 L11 20 L19.5 15" fill="none" stroke="#5a5a5a" stroke-width="1.8"/></svg>
<div class="mbtn" style="left:353px;top:320px;width:37.5px;height:37.5px;border-radius:50%"></div>
<svg class="abs" style="left:362px;top:329px" width="19" height="20" viewBox="0 0 24 24"><path d="M12 2C8.13 2 5 5.13 5 9c0 5.25 7 13 7 13s7-7.75 7-13c0-3.87-3.13-7-7-7zm0 9.5c-1.38 0-2.5-1.12-2.5-2.5s1.12-2.5 2.5-2.5 2.5 1.12 2.5 2.5-1.12 2.5-2.5 2.5z" fill="#c4c4c4"/></svg>
<div class="mbtn" style="left:710px;top:183px;width:116.5px;height:37px;border-radius:18.5px"></div>
<svg class="abs" style="left:722.7px;top:192.4px" width="17" height="17" viewBox="0 0 17 17"><path d="M8.5 0V17M0 8.5H17" stroke="#616161" stroke-width="2.3"/></svg>
<div class="abs" style="left:750px;top:191px;font-size:15px;color:#5c6066;line-height:20px;white-space:nowrap;letter-spacing:-0.1px">Add tank</div>
<svg class="abs" style="left:1154.8px;top:187.7px" width="25.4" height="25.4" viewBox="0 0 24 24"><path d="M7 14H5v5h5v-2H7v-3zm-2-4h2V7h3V5H5v5zm12 7h-3v2h5v-5h-2v3zM14 5v2h3v3h2V5h-5z" fill="#6f7377" fill-opacity="0.85"/></svg>
<!-- markers -->
<div class="abs" style="left:485.5px;top:443.5px;width:35px;height:35px;border:1.6px solid #1f8b37;border-radius:5px;background:#fff"></div>
<svg class="abs" style="left:494px;top:448.5px" width="18" height="25" viewBox="0 0 18 25"><ellipse cx="9" cy="4" rx="8" ry="3.3" fill="#1b7f2f"/><path d="M1 6.8 Q9 10.5 17 6.8 V13.2 Q9 16.5 1 13.2 Z M1 15 Q9 18.3 17 15 V21 Q9 25.5 1 21 Z" fill="#1b7f2f"/><ellipse cx="12" cy="3" rx="1.3" ry="0.8" fill="#fff" fill-opacity="0.7"/></svg>
<div class="abs" style="left:850px;top:423px;width:35px;height:35px;border:1.6px solid #1f8b37;border-radius:5px;background:#fff"></div>
<svg class="abs" style="left:858.5px;top:428px" width="18" height="25" viewBox="0 0 18 25"><ellipse cx="9" cy="4" rx="8" ry="3.3" fill="#1b7f2f"/><path d="M1 6.8 Q9 10.5 17 6.8 V13.2 Q9 16.5 1 13.2 Z M1 15 Q9 18.3 17 15 V21 Q9 25.5 1 21 Z" fill="#1b7f2f"/><ellipse cx="12" cy="3" rx="1.3" ry="0.8" fill="#fff" fill-opacity="0.7"/></svg>
<div class="abs" style="left:1007px;top:448px;width:49px;height:49px;border-radius:50%;background:rgba(255,40,30,0.45)"></div>
<div class="abs" style="left:1012.3px;top:453.4px;width:38.2px;height:38.2px;border-radius:50%;background:#ff1010;color:#3e5566;font-size:13px;text-align:center;line-height:38px">2</div>

<style>
.fpanel{position:absolute;top:853px;height:192px;background:#f5f5f5;border-radius:9px}
.frow{position:absolute;font-size:18px;color:#212121;line-height:24px;white-space:nowrap}
.tog{position:absolute;width:52px;height:30px;border-radius:15px;background:#9698fb}
.tog:after{content:"";position:absolute;left:24px;top:2px;width:26px;height:26px;border-radius:50%;background:#fafafa;box-shadow:0 1px 2px rgba(0,0,0,0.35)}
</style>
<div class="abs" style="left:350px;top:792px;font-size:20.4px;letter-spacing:0.35px;-webkit-text-stroke:0.5px #1f1f1f;color:#1f1f1f;line-height:24px;white-space:nowrap">Filter alarms</div>
<svg class="abs" style="left:474px;top:797px" width="19" height="16" viewBox="0 0 19 16"><path d="M2.5 4.2 L9.6 11.5 L16.8 4.2" fill="none" stroke="#6e6e6e" stroke-width="2"/></svg>
<div class="abs" style="left:964px;top:792.5px;font-size:18.8px;letter-spacing:0.2px;-webkit-text-stroke:0.45px #4444d4;color:#4444d4;line-height:24px;white-space:nowrap">Disable all</div>
<div class="abs" style="left:1065px;top:783px;width:120px;height:45px;border:1px solid #dadada;border-radius:5px"></div>
<div class="abs" style="left:1085px;top:792.5px;font-size:18.4px;letter-spacing:0.15px;-webkit-text-stroke:0.45px #4444d4;color:#4444d4;line-height:24px;white-space:nowrap">Enable all</div>
<div class="fpanel" style="left:348px;width:413px"></div>
<div class="fpanel" style="left:776px;width:414px"></div>
<!-- left rows -->
<svg class="abs" style="left:361px;top:880px" width="24" height="20" viewBox="0 0 24 20"><path d="M1.5 10.5 L8 17 L22.5 2.5" fill="none" stroke="#111" stroke-width="2.6"/></svg>
<div class="frow" style="left:398px;top:878.5px">No alarms</div>
<div class="tog" style="left:699px;top:875px"></div>
<svg class="abs" style="left:359px;top:942px" width="28" height="26" viewBox="0 0 28 26"><path d="M4.8 3 V23.5 H18.5 V3" fill="none" stroke="#111" stroke-width="2.6"/><path d="M11.6 10 C13.4 13 14.8 14.5 14.8 16.6 A3.3 3.3 0 0 1 8.3 16.6 C8.3 14.5 9.8 13 11.6 10Z" fill="#111"/><path d="M24.8 9 V17.5 M24.8 19.5 V22.5" stroke="#111" stroke-width="2.6"/></svg>
<div class="frow" style="left:398px;top:943.5px">Low remaning level</div>
<div class="tog" style="left:699px;top:940px"></div>
<svg class="abs" style="left:359px;top:1007px" width="28" height="27" viewBox="0 0 28 27"><path d="M6 2h6v3h3.3v21.3H2.7V5H6z" fill="none" stroke="#111" stroke-width="2.4"/><path d="M5.5 19.5h7v3h-7z" fill="#111"/><path d="M27 4.5 L24 4.5 L17.5 16.5 H21.5 L19 25 L27.8 12 H23.8 Z" fill="#111"/></svg>
<div class="frow" style="left:398px;top:1008.5px">Low battery</div>
<div class="tog" style="left:699px;top:1005px"></div>
<!-- right rows -->
<svg class="abs" style="left:788px;top:876px" width="26" height="28" viewBox="0 0 26 28"><path d="M7 5.8 a3.6 3.6 0 0 1 7.2 0 V14.5 a6.8 6.8 0 1 1 -7.2 0 Z" fill="#111"/><path d="M10.6 4.6 V13.5" stroke="#f5f5f5" stroke-width="2" stroke-linecap="round"/><path d="M21 8.5 V16 M21 18 V20.5" stroke="#111" stroke-width="2.7"/></svg>
<div class="frow" style="left:826.5px;top:878.5px">Low temperature</div>
<div class="tog" style="left:1128px;top:875px"></div>
<svg class="abs" style="left:788px;top:941px" width="26" height="28" viewBox="0 0 26 28"><path d="M7 5.8 a3.6 3.6 0 0 1 7.2 0 V14.5 a6.8 6.8 0 1 1 -7.2 0 Z" fill="#111"/><path d="M10.6 4.6 V7.5" stroke="#f5f5f5" stroke-width="2" stroke-linecap="round"/><path d="M21 8.5 V16 M21 18 V20.5" stroke="#111" stroke-width="2.7"/></svg>
<div class="frow" style="left:826.5px;top:943.5px">High temperature</div>
<div class="tog" style="left:1128px;top:940px"></div>
<svg class="abs" style="left:786px;top:1006px" width="30" height="28" viewBox="0 0 30 28"><path d="M2 9.5 Q6.5 5 11.5 3.8 M18.5 3.8 Q23.5 5 28 9.5 M5.8 13 Q8.5 10.5 11.5 9.5 M18.5 9.5 Q21.5 10.5 24.2 13 M9.5 16.5 L11.5 15.2 M18.5 15.2 L20.5 16.5" fill="none" stroke="#111" stroke-width="2.6" stroke-linecap="round"/><path d="M13 3 H17 L16 18 H14 Z" fill="#111"/><circle cx="15" cy="23.5" r="2.2" fill="#111"/></svg>
<div class="frow" style="left:826.5px;top:1008.5px">Offline</div>
<div class="tog" style="left:1128px;top:1005px"></div>

<div class="abs" style="left:1255px;top:188.32px;font-size:19.3px;-webkit-text-stroke:0.5px #1e2330;color:#1e2330;line-height:24px;white-space:nowrap;letter-spacing:0.3px">Tanks</div>
<svg class="abs" style="left:1737.0px;top:185.6px;fill:#8e8e8e" width="26" height="26" viewBox="0 0 24 24"><path d="M19 13h-6v6h-2v-6H5v-2h6V5h2v6h6v2z"/></svg>
<svg class="abs" style="left:1777.0px;top:185.6px;fill:#8e8e8e" width="26" height="26" viewBox="0 0 24 24"><path d="M15.5 14h-.79l-.28-.27C15.41 12.59 16 11.11 16 9.5 16 5.91 13.09 3 9.5 3S3 5.91 3 9.5 5.91 16 9.5 16c1.61 0 3.09-.59 4.23-1.57l.27.28v.79l5 4.99L20.49 19l-4.99-5zm-6 0C7.01 14 5 11.99 5 9.5S7.01 5 9.5 5 14 7.01 14 9.5 11.99 14 9.5 14z"/></svg>
<svg class="abs" style="left:1817.5px;top:185.6px;fill:#8e8e8e" width="26" height="26" viewBox="0 0 24 24"><path d="M14 2H6c-1.1 0-2 .9-2 2v16c0 1.1.9 2 2 2h12c1.1 0 2-.9 2-2V8l-6-6zm-1 7V3.5L18.5 9H13z"/><path d="M9.5 19 L14 14.5 V17 H15.5 V12 H10.5 V13.5 H13 L8.5 18 Z" fill="#fff"/></svg>
<svg class="abs" style="left:1857.0px;top:185.6px;fill:#8e8e8e" width="26" height="26" viewBox="0 0 24 24"><path d="M7 14H5v5h5v-2H7v-3zm-2-4h2V7h3V5H5v5zm12 7h-3v2h5v-5h-2v3zM14 5v2h3v3h2V5h-5z"/></svg>
<div class="abs" style="left:1251px;top:246.04px;font-size:15px;color:#a3a3a3;line-height:20px;white-space:nowrap;letter-spacing:-0.1px">Tank</div>
<div class="abs" style="left:1327px;top:246.04px;font-size:15px;color:#a3a3a3;line-height:20px;white-space:nowrap;letter-spacing:-0.1px">Remaining, %</div>
<div class="abs" style="left:1452px;top:246.04px;font-size:15px;color:#a3a3a3;line-height:20px;white-space:nowrap;letter-spacing:-0.1px">Temperature</div>
<div class="abs" style="left:1572.5px;top:246.04px;font-size:15px;color:#a3a3a3;line-height:20px;white-space:nowrap;letter-spacing:-0.1px">Battery</div>
<div class="abs" style="left:1656px;top:246.04px;font-size:15px;color:#a3a3a3;line-height:20px;white-space:nowrap;letter-spacing:-0.1px">Connection</div>
<div class="abs" style="left:1235px;top:290px;width:655px;height:1px;background:#dedede"></div>
<div class="abs" style="left:1251.5px;top:299.02px;font-size:17.5px;color:#3b404a;line-height:24px;white-space:nowrap;">Tank</div>
<div class="abs" style="left:1251.5px;top:323.72px;font-size:17.5px;color:#3b404a;line-height:24px;white-space:nowrap;">1113</div>
<div class="abs" style="left:1332.5px;top:299.02px;font-size:17.5px;color:#3b404a;line-height:24px;white-space:nowrap;">13%</div>
<div class="abs" style="left:1332.5px;top:323.72px;font-size:17.5px;color:#3b404a;line-height:24px;white-space:nowrap;">(116422L)</div>
<div class="abs" style="left:1417px;top:314px;width:22px;height:19.5px;border-radius:4.5px;background:#e9e9fd;overflow:hidden"><div style="width:2.0px;height:100%;background:#b8b8f4"></div></div>
<div class="abs" style="left:1452px;top:311.12px;font-size:17.5px;color:#3b404a;line-height:24px;white-space:nowrap;">39 °C</div>
<div class="abs" style="left:1572.5px;top:311.12px;font-size:17.5px;-webkit-text-stroke:0.5px #d1242f;color:#d1242f;line-height:24px;white-space:nowrap;">11%</div>
<div class="abs" style="left:1656px;top:306px;width:71px;height:35px;border-radius:8px;background:#edf6ee"></div>
<div class="abs" style="left:1666px;top:312.02px;font-size:17.8px;-webkit-text-stroke:0.5px #2e9a3e;color:#2e9a3e;line-height:22px;white-space:nowrap;letter-spacing:0.15px">Online</div>
<svg class="abs" style="left:1770.5px;top:309.5px;fill:#8e8e8e" width="29" height="29" viewBox="0 0 24 24"><path d="M3 17.25V21h3.75L17.81 9.94l-3.75-3.75L3 17.25zM20.71 7.04c.39-.39.39-1.02 0-1.41l-2.34-2.34c-.39-.39-1.02-.39-1.41 0l-1.83 1.83 3.75 3.75 1.83-1.83z"/></svg>
<svg class="abs" style="left:1830.5px;top:309.3px;fill:#8e8e8e" width="29" height="29" viewBox="0 0 24 24"><path d="M6 19c0 1.1.9 2 2 2h8c1.1 0 2-.9 2-2V7H6v12zM19 4h-3.5l-1-1h-5l-1 1H5v2h14V4z"/></svg>
<div class="abs" style="left:1251.5px;top:364.02px;font-size:17.5px;color:#3b404a;line-height:24px;white-space:nowrap;">Tank</div>
<div class="abs" style="left:1251.5px;top:388.72px;font-size:17.5px;color:#3b404a;line-height:24px;white-space:nowrap;">1288</div>
<div class="abs" style="left:1332.5px;top:364.02px;font-size:17.5px;color:#3b404a;line-height:24px;white-space:nowrap;">94%</div>
<div class="abs" style="left:1332.5px;top:388.72px;font-size:17.5px;color:#3b404a;line-height:24px;white-space:nowrap;">(30873L)</div>
<div class="abs" style="left:1407.5px;top:379px;width:31.5px;height:19.5px;border-radius:4.5px;background:#e9e9fd;overflow:hidden"><div style="width:29.6px;height:100%;background:#b8b8f4"></div></div>
<div class="abs" style="left:1452px;top:376.12px;font-size:17.5px;-webkit-text-stroke:0.5px #d1242f;color:#d1242f;line-height:24px;white-space:nowrap;">82 °C</div>
<div class="abs" style="left:1572.5px;top:376.12px;font-size:17.5px;color:#3b404a;line-height:24px;white-space:nowrap;">40%</div>
<div class="abs" style="left:1656px;top:371px;width:71px;height:35px;border-radius:8px;background:#edf6ee"></div>
<div class="abs" style="left:1666px;top:377.02px;font-size:17.8px;-webkit-text-stroke:0.5px #2e9a3e;color:#2e9a3e;line-height:22px;white-space:nowrap;letter-spacing:0.15px">Online</div>
<svg class="abs" style="left:1770.5px;top:374.5px;fill:#8e8e8e" width="29" height="29" viewBox="0 0 24 24"><path d="M3 17.25V21h3.75L17.81 9.94l-3.75-3.75L3 17.25zM20.71 7.04c.39-.39.39-1.02 0-1.41l-2.34-2.34c-.39-.39-1.02-.39-1.41 0l-1.83 1.83 3.75 3.75 1.83-1.83z"/></svg>
<svg class="abs" style="left:1830.5px;top:374.3px;fill:#8e8e8e" width="29" height="29" viewBox="0 0 24 24"><path d="M6 19c0 1.1.9 2 2 2h8c1.1 0 2-.9 2-2V7H6v12zM19 4h-3.5l-1-1h-5l-1 1H5v2h14V4z"/></svg>
<div class="abs" style="left:1251.5px;top:429.02px;font-size:17.5px;color:#3b404a;line-height:24px;white-space:nowrap;">Tank</div>
<div class="abs" style="left:1251.5px;top:453.72px;font-size:17.5px;color:#3b404a;line-height:24px;white-space:nowrap;">1471</div>
<div class="abs" style="left:1332.5px;top:429.02px;font-size:17.5px;color:#3b404a;line-height:24px;white-space:nowrap;">66%</div>
<div class="abs" style="left:1332.5px;top:453.72px;font-size:17.5px;color:#3b404a;line-height:24px;white-space:nowrap;">(16140L)</div>
<div class="abs" style="left:1407.5px;top:444px;width:31.5px;height:19.5px;border-radius:4.5px;background:#e9e9fd;overflow:hidden"><div style="width:20.8px;height:100%;background:#b8b8f4"></div></div>
<div class="abs" style="left:1452px;top:441.12px;font-size:17.5px;color:#3b404a;line-height:24px;white-space:nowrap;">23 °C</div>
<div class="abs" style="left:1572.5px;top:441.12px;font-size:17.5px;color:#3b404a;line-height:24px;white-space:nowrap;">62%</div>
<div class="abs" style="left:1656px;top:436px;width:71px;height:35px;border-radius:8px;background:#edf6ee"></div>
<div class="abs" style="left:1666px;top:442.02px;font-size:17.8px;-webkit-text-stroke:0.5px #2e9a3e;color:#2e9a3e;line-height:22px;white-space:nowrap;letter-spacing:0.15px">Online</div>
<svg class="abs" style="left:1770.5px;top:439.5px;fill:#8e8e8e" width="29" height="29" viewBox="0 0 24 24"><path d="M3 17.25V21h3.75L17.81 9.94l-3.75-3.75L3 17.25zM20.71 7.04c.39-.39.39-1.02 0-1.41l-2.34-2.34c-.39-.39-1.02-.39-1.41 0l-1.83 1.83 3.75 3.75 1.83-1.83z"/></svg>
<svg class="abs" style="left:1830.5px;top:439.3px;fill:#8e8e8e" width="29" height="29" viewBox="0 0 24 24"><path d="M6 19c0 1.1.9 2 2 2h8c1.1 0 2-.9 2-2V7H6v12zM19 4h-3.5l-1-1h-5l-1 1H5v2h14V4z"/></svg>
<div class="abs" style="left:1251.5px;top:494.02px;font-size:17.5px;color:#3b404a;line-height:24px;white-space:nowrap;">Tank</div>
<div class="abs" style="left:1251.5px;top:518.72px;font-size:17.5px;color:#3b404a;line-height:24px;white-space:nowrap;">1273</div>
<div class="abs" style="left:1332.5px;top:494.02px;font-size:17.5px;color:#3b404a;line-height:24px;white-space:nowrap;">18%</div>
<div class="abs" style="left:1332.5px;top:518.72px;font-size:17.5px;color:#3b404a;line-height:24px;white-space:nowrap;">(1703gal)</div>
<div class="abs" style="left:1412px;top:509px;width:27px;height:19.5px;border-radius:4.5px;background:#e9e9fd;overflow:hidden"><div style="width:4.9px;height:100%;background:#b8b8f4"></div></div>
<div class="abs" style="left:1452px;top:506.12px;font-size:17.5px;color:#3b404a;line-height:24px;white-space:nowrap;">9 °C</div>
<div class="abs" style="left:1572.5px;top:506.12px;font-size:17.5px;color:#3b404a;line-height:24px;white-space:nowrap;">67%</div>
<div class="abs" style="left:1656px;top:501px;width:71px;height:35px;border-radius:8px;background:#edf6ee"></div>
<div class="abs" style="left:1666px;top:507.02px;font-size:17.8px;-webkit-text-stroke:0.5px #2e9a3e;color:#2e9a3e;line-height:22px;white-space:nowrap;letter-spacing:0.15px">Online</div>
<svg class="abs" style="left:1770.5px;top:504.5px;fill:#8e8e8e" width="29" height="29" viewBox="0 0 24 24"><path d="M3 17.25V21h3.75L17.81 9.94l-3.75-3.75L3 17.25zM20.71 7.04c.39-.39.39-1.02 0-1.41l-2.34-2.34c-.39-.39-1.02-.39-1.41 0l-1.83 1.83 3.75 3.75 1.83-1.83z"/></svg>
<svg class="abs" style="left:1830.5px;top:504.3px;fill:#8e8e8e" width="29" height="29" viewBox="0 0 24 24"><path d="M6 19c0 1.1.9 2 2 2h8c1.1 0 2-.9 2-2V7H6v12zM19 4h-3.5l-1-1h-5l-1 1H5v2h14V4z"/></svg>
<div class="abs" style="left:1235px;top:597px;width:649px;height:7px;background:#d6d6d6"></div>
<div class="abs" style="left:1254.6px;top:660.02px;font-size:19.6px;-webkit-text-stroke:0.5px #1e2330;color:#1e2330;line-height:24px;white-space:nowrap;letter-spacing:0.2px">Alarms</div>
<svg class="abs" style="left:1696.6px;top:657.2px;fill:#8e8e8e" width="26" height="26" viewBox="0 0 24 24"><path d="M19.14 12.94c.04-.3.06-.61.06-.94 0-.32-.02-.64-.07-.94l2.03-1.58c.18-.14.23-.41.12-.61l-1.92-3.32c-.12-.22-.37-.29-.59-.22l-2.39.96c-.5-.38-1.03-.7-1.62-.94l-.36-2.54c-.04-.24-.24-.41-.48-.41h-3.84c-.24 0-.43.17-.47.41l-.36 2.54c-.59.24-1.13.57-1.62.94l-2.39-.96c-.22-.08-.47 0-.59.22L2.74 8.87c-.12.21-.08.47.12.61l2.03 1.58c-.05.3-.09.63-.09.94s.02.64.07.94l-2.03 1.58c-.18.14-.23.41-.12.61l1.92 3.32c.12.22.37.29.59.22l2.39-.96c.5.38 1.03.7 1.62.94l.36 2.54c.05.24.24.41.48.41h3.84c.24 0 .44-.17.47-.41l.36-2.54c.59-.24 1.13-.56 1.62-.94l2.39.96c.22.08.47 0 .59-.22l1.92-3.32c.12-.22.07-.47-.12-.61l-2.01-1.58zM12 15.6c-1.98 0-3.6-1.62-3.6-3.6s1.62-3.6 3.6-3.6 3.6 1.62 3.6 3.6-1.62 3.6-3.6 3.6z"/></svg>
<svg class="abs" style="left:1736.5px;top:657.2px;fill:#8e8e8e" width="26" height="26" viewBox="0 0 24 24"><path d="M15.5 14h-.79l-.28-.27C15.41 12.59 16 11.11 16 9.5 16 5.91 13.09 3 9.5 3S3 5.91 3 9.5 5.91 16 9.5 16c1.61 0 3.09-.59 4.23-1.57l.27.28v.79l5 4.99L20.49 19l-4.99-5zm-6 0C7.01 14 5 11.99 5 9.5S7.01 5 9.5 5 14 7.01 14 9.5 11.99 14 9.5 14z"/></svg>
<svg class="abs" style="left:1777.0px;top:657.2px;fill:#8e8e8e" width="26" height="26" viewBox="0 0 24 24"><path d="M10 18h4v-2h-4v2zM3 6v2h18V6H3zm3 7h12v-2H6v2z"/></svg>
<svg class="abs" style="left:1817.5px;top:657.2px;fill:#8e8e8e" width="26" height="26" viewBox="0 0 24 24"><path d="M14 2H6c-1.1 0-2 .9-2 2v16c0 1.1.9 2 2 2h12c1.1 0 2-.9 2-2V8l-6-6zm-1 7V3.5L18.5 9H13z"/><path d="M9.5 19 L14 14.5 V17 H15.5 V12 H10.5 V13.5 H13 L8.5 18 Z" fill="#fff"/></svg>
<svg class="abs" style="left:1857.0px;top:657.2px;fill:#8e8e8e" width="26" height="26" viewBox="0 0 24 24"><path d="M7 14H5v5h5v-2H7v-3zm-2-4h2V7h3V5H5v5zm12 7h-3v2h5v-5h-2v3zM14 5v2h3v3h2V5h-5z"/></svg>
<div class="abs" style="left:1251px;top:718.04px;font-size:15px;color:#a3a3a3;line-height:20px;white-space:nowrap;letter-spacing:-0.1px">Tank</div>
<div class="abs" style="left:1327px;top:718.04px;font-size:15px;color:#a3a3a3;line-height:20px;white-space:nowrap;letter-spacing:-0.1px">Created time</div>
<div class="abs" style="left:1489px;top:718.04px;font-size:15px;color:#a3a3a3;line-height:20px;white-space:nowrap;letter-spacing:-0.1px">Type</div>
<div class="abs" style="left:1620.3px;top:718.04px;font-size:15px;color:#a3a3a3;line-height:20px;white-space:nowrap;letter-spacing:-0.1px">Details</div>
<svg class="abs" style="left:1418px;top:718px" width="20" height="20" viewBox="0 0 24 24"><path d="M20 12l-1.41-1.41L13 16.17V4h-2v12.17l-5.58-5.59L4 12l8 8 8-8z" fill="#757575"/></svg>
<div class="abs" style="left:1235px;top:762px;width:655px;height:1px;background:#dedede"></div>
<div class="abs" style="left:1251.5px;top:771.52px;font-size:17.5px;color:#3b404a;line-height:24px;white-space:nowrap;">Tank</div>
<div class="abs" style="left:1251.5px;top:796.32px;font-size:17.5px;color:#3b404a;line-height:24px;white-space:nowrap;">1288</div>
<div class="abs" style="left:1327px;top:771.52px;font-size:17.5px;color:#3b404a;line-height:24px;white-space:nowrap;">2026-01-19</div>
<div class="abs" style="left:1327px;top:796.32px;font-size:17.5px;color:#3b404a;line-height:24px;white-space:nowrap;">13:16:37</div>
<div class="abs" style="left:1489px;top:771.52px;font-size:17.5px;color:#3b404a;line-height:24px;white-space:nowrap;">High</div>
<div class="abs" style="left:1489px;top:796.32px;font-size:17.5px;color:#3b404a;line-height:24px;white-space:nowrap;">Temperature</div>
<div class="abs" style="left:1620.3px;top:783.32px;font-size:17.2px;-webkit-text-stroke:0.5px #d1242f;color:#d1242f;line-height:24px;white-space:nowrap;">82.4 °C</div>
<svg class="abs" style="left:1710.0px;top:781.0px;fill:#8e8e8e" width="30" height="30" viewBox="0 0 24 24"><path d="M21.99 4c0-1.1-.89-2-1.99-2H4c-1.1 0-2 .9-2 2v12c0 1.1.9 2 2 2h14l4 4-.01-18zM18 14H6v-2h12v2zm0-3H6V9h12v2zm0-3H6V6h12v2z"/></svg>
<svg class="abs" style="left:1770.0px;top:781.0px;fill:#8e8e8e" width="30" height="30" viewBox="0 0 24 24"><path d="M6 10c-1.1 0-2 .9-2 2s.9 2 2 2 2-.9 2-2-.9-2-2-2zm12 0c-1.1 0-2 .9-2 2s.9 2 2 2 2-.9 2-2-.9-2-2-2zm-6 0c-1.1 0-2 .9-2 2s.9 2 2 2 2-.9 2-2-.9-2-2-2z"/></svg>
<svg class="abs" style="left:1830.0px;top:781.0px;fill:#8e8e8e" width="30" height="30" viewBox="0 0 24 24"><path d="M19 6.41L17.59 5 12 10.59 6.41 5 5 6.41 10.59 12 5 17.59 6.41 19 12 13.41 17.59 19 19 17.59 13.41 12z"/></svg>
<div class="abs" style="left:1251.5px;top:836.52px;font-size:17.5px;color:#3b404a;line-height:24px;white-space:nowrap;">Tank</div>
<div class="abs" style="left:1251.5px;top:861.32px;font-size:17.5px;color:#3b404a;line-height:24px;white-space:nowrap;">1113</div>
<div class="abs" style="left:1327px;top:836.52px;font-size:17.5px;color:#3b404a;line-height:24px;white-space:nowrap;">2026-01-19</div>
<div class="abs" style="left:1327px;top:861.32px;font-size:17.5px;color:#3b404a;line-height:24px;white-space:nowrap;">13:16:37</div>
<div class="abs" style="left:1489px;top:836.52px;font-size:17.5px;color:#3b404a;line-height:24px;white-space:nowrap;">Low Battery</div>
<div class="abs" style="left:1489px;top:861.32px;font-size:17.5px;color:#3b404a;line-height:24px;white-space:nowrap;">Level</div>
<div class="abs" style="left:1620.3px;top:848.32px;font-size:17.2px;-webkit-text-stroke:0.5px #d1242f;color:#d1242f;line-height:24px;white-space:nowrap;">11%</div>
<svg class="abs" style="left:1710.0px;top:846.0px;fill:#8e8e8e" width="30" height="30" viewBox="0 0 24 24"><path d="M21.99 4c0-1.1-.89-2-1.99-2H4c-1.1 0-2 .9-2 2v12c0 1.1.9 2 2 2h14l4 4-.01-18zM18 14H6v-2h12v2zm0-3H6V9h12v2zm0-3H6V6h12v2z"/></svg>
<svg class="abs" style="left:1770.0px;top:846.0px;fill:#8e8e8e" width="30" height="30" viewBox="0 0 24 24"><path d="M6 10c-1.1 0-2 .9-2 2s.9 2 2 2 2-.9 2-2-.9-2-2-2zm12 0c-1.1 0-2 .9-2 2s.9 2 2 2 2-.9 2-2-.9-2-2-2zm-6 0c-1.1 0-2 .9-2 2s.9 2 2 2 2-.9 2-2-.9-2-2-2z"/></svg>
<svg class="abs" style="left:1830.0px;top:846.0px;fill:#8e8e8e" width="30" height="30" viewBox="0 0 24 24"><path d="M19 6.41L17.59 5 12 10.59 6.41 5 5 6.41 10.59 12 5 17.59 6.41 19 12 13.41 17.59 19 19 17.59 13.41 12z"/></svg>

</body></html>
